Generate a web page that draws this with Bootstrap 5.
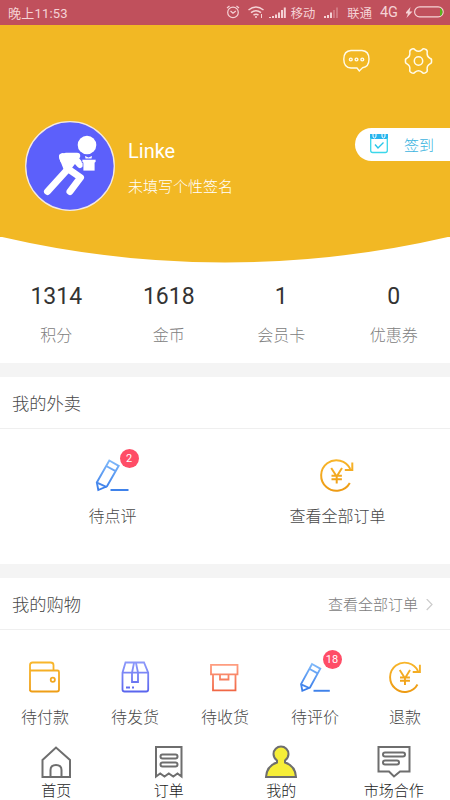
<!DOCTYPE html>
<html lang="zh-CN">
<head>
<meta charset="utf-8">
<meta name="viewport" content="width=device-width, initial-scale=1">
<title>我的</title>
<link href="https://cdn.jsdelivr.net/npm/bootstrap@5.3.0/dist/css/bootstrap.min.css" rel="stylesheet">
<style>
body{font-family:Roboto,"Noto Sans CJK SC",sans-serif;font-weight:300;color:#555;background:#fff;line-height:1;overflow:hidden}
svg{display:block;flex:none;fill:none}
.screen{width:450px;height:800px}
.status{height:25px;background:#c0505c;color:#f5d3d6;font-size:12.3px;font-weight:400;padding:0 6px 0 8px}
.clock{font-size:13px;letter-spacing:.2px;padding-top:2px}
.net{font-size:14.500px;padding-top:2px}
.bolt{fill:#f5d3d6}
.hero{height:213px;background:#f2b824;color:#fff}
.tools{height:74px;padding-right:17px}
.tools svg{margin-top:-1px}
.profile{height:90px;margin-top:22px;padding-left:25px}
.avatar{width:90px;height:90px}
.who{margin-left:13px}
.nick{font-size:20px;line-height:24px;margin-top:18px;font-weight:400}
.sign{font-size:15px;line-height:20px;margin-top:14px;color:#fff}
.signin{width:95px;height:33px;margin-top:7px;background:#fff;color:#3db4e0;font-size:15px;border-radius:17px 0 0 17px;padding-left:15px}
.signin span{padding-top:4px}
.stats{height:100px}
.num{font-size:23px;line-height:26px;color:#333;margin-top:21px;font-weight:400}
.cap{font-size:16px;line-height:20px;color:#808080;margin-top:16px}
.gap-strip{height:14px;background:#f4f4f4}
.head{height:52px;border-bottom:1px solid #efefef;font-size:17.3px;color:#484848;padding:4px 17px 0 12px}
.more{font-size:15px;color:#7c7c7c}
.takeout{height:135px}
.entry{font-size:16px;color:#484848}
.takeout .entry{padding-top:27px}
.takeout .lbl{margin-top:14px}
.takeout svg{margin-left:-2px}
.shop{height:106px}
.shop .entry{padding-top:30px}
.shop .lbl{margin-top:13px}
.lbl{line-height:20px}
.dot{top:-7px;left:24px;width:19px;height:19px;background:#ff4d67;color:#fff;font-size:11px;font-weight:400}
.shop .dot{top:-10px;left:24px}
.tabs{height:64px;color:#1c1c1c;font-size:15px;padding-top:9px}
.tabs .lbl{margin-top:2px}
</style>
</head>
<body>
<main class="screen d-flex flex-column">
<div class="status d-flex align-items-center justify-content-between">
  <span class="clock">晚上11:53</span>
  <div class="d-flex align-items-center">
    <svg width="14" height="14" stroke="#f5d3d6" stroke-width="1.2"><circle cx="7" cy="7.4" r="5.3"/><path d="M4.5 6L7 8.2 9.8 6M1 3L3.5 1M10.500 1L13 3"/></svg>
    <svg class="ms-2" width="17" height="14" stroke="#f5d3d6" stroke-width="1.5"><path d="M.5 5Q8 -1 15.500 5M3 7.700Q8 3.700 13 7.700M5.500 10.200Q8 8.200 10.500 10.200"/><circle cx="8" cy="12" r="1" fill="#f5d3d6" stroke="none"/><path d="M13.500 9v4" stroke-width="1"/></svg>
    <svg class="ms-1" width="18" height="13" stroke="#f5d3d6" stroke-width="2"><path d="M1 12v-1M4 12v-2M7 12V8.500M10 12V6.500M13 12V4M15.800 12V1.500"/></svg>
    <span class="ms-1 pt-1">移动</span>
    <svg class="ms-2" width="16" height="13" stroke="#f5d3d6" stroke-width="2"><path d="M2 12v-2M5 12V9M8 12V6.500"/><path d="M11 12V4M14 12V1.500" opacity=".3"/></svg>
    <span class="ms-2 pt-1">联通</span>
    <span class="net ms-2">4G</span>
    <svg class="bolt ms-2" width="8" height="13"><path d="M4.500 1L-1 7.500h3L.500 12 6.500 5.500h-3z"/></svg>
    <svg width="30" height="12"><rect x=".6" y=".9" width="28.600" height="10" rx="5" stroke="#f5d3d6" stroke-width="1.200"/><path d="M26 2v8q2.500-1 2.500-4T26 2z" fill="#58b51c"/></svg>
  </div>
</div>

<header class="hero">
  <div class="tools d-flex justify-content-end align-items-center">
    <svg class="me-4" width="29" height="26" stroke="#fffbea" stroke-width="1.400"><path d="M8 2.500h11Q26 3 26 11T19.500 19.800L16.300 23 14 20H8Q.8 19.500.8 11.200T8 2.500z"/><circle cx="7.800" cy="11.500" r="1.400"/><circle cx="13.500" cy="11.500" r="1.400"/><circle cx="19.300" cy="11.500" r="1.400"/></svg>
    <svg class="ms-2" width="29" height="28" stroke="#fffbea" stroke-width="1.500" stroke-linejoin="round"><path d="M8 2Q9.800 1.200 11 2.800 14.500 5.700 18 2.800 19.300 1.200 21.300 2.200 23.600 3 23.200 5 22.500 9.600 26 11.200 28 11.800 27.500 14 28 16.200 26 16.800 22.500 18.500 23.200 23 23.600 25 21.300 25.800 19.300 26.800 18 25.200 14.500 22.300 11 25.200 9.700 26.800 7.700 25.800 5.400 25 5.800 23 6.500 18.500 3 16.800 1 16.200 1.500 14 1 11.800 3 11.200 6.500 9.500 5.800 5 5.600 2.900 8 2z"/><circle cx="14.500" cy="14" r="4.200"/></svg>
  </div>
  <div class="profile d-flex">
    <svg class="avatar" viewBox="0 0 90 90"><circle cx="45" cy="45" r="44.300" fill="#5c60fb" stroke="#f4eae0" stroke-width="1.300"/>
      <g stroke="#fff" stroke-width="7" stroke-linecap="round" stroke-linejoin="round"><path d="M42 49L22.500 70.500M44 48.500L55.500 56.500 45 70.500"/><path d="M37.500 36.500L41 35H52L42 48z" fill="#fff" stroke-width="6.500"/><path d="M37.500 35.500l1 3.500M51 39l4 4.500" stroke-width="7"/></g>
      <g fill="#fff"><circle cx="62" cy="24" r="9.300"/><path d="M57 38.300h14v3.200h-1v8.500H58v-8.500h-1z" stroke="#5c60fb" stroke-width=".8"/><path d="M60.500 37.500l-.5-2.500 3.500 1.500 3.500-1.500-.5 2.500z"/></g></svg>
    <div class="who flex-grow-1"><div class="nick">Linke</div><div class="sign">未填写个性签名</div></div>
    <div class="signin d-flex align-items-center">
      <svg width="18" height="20"><path d="M0 0h18v5H0z" fill="#27b5ee"/><path d="M.7 4v12.500Q.7 18.500 2.700 18.500h12.600Q17.300 18.500 17.300 16.500V4" stroke="#3bd7ea" stroke-width="1.300"/><path d="M5 10.500l3 3.500 5.500-5.500" stroke="#28c6e9" stroke-width="1.400"/><path d="M3 0v2q0 2 1.500 2T6 2V0M12 0v2q0 2 1.500 2T15 2V0" stroke="#fff"/></svg>
      <span class="ms-3">签到</span>
    </div>
  </div>
</header>
<svg width="450" height="26"><path d="M0 -.500A986.600 986.600 0 0 0 450 -.500z" fill="#f2b824"/></svg>

<section class="stats row g-0 text-center">
  <div class="col-3"><div class="num">1314</div><div class="cap">积分</div></div>
  <div class="col-3"><div class="num">1618</div><div class="cap">金币</div></div>
  <div class="col-3"><div class="num">1</div><div class="cap">会员卡</div></div>
  <div class="col-3"><div class="num">0</div><div class="cap">优惠券</div></div>
</section>
<div class="gap-strip"></div>

<section>
  <div class="head d-flex align-items-center">我的外卖</div>
  <div class="takeout row g-0">
    <div class="entry col-6 d-flex flex-column align-items-center">
      <div class="position-relative">
        <svg width="36" height="37" viewBox="0 0 36 37" stroke="url(#blue)" stroke-width="1.900"><defs>
          <linearGradient id="blue" gradientUnits="userSpaceOnUse" x1="0" y1="3" x2="0" y2="36"><stop stop-color="#83bcfb"/><stop offset="1" stop-color="#3478e8"/></linearGradient>
          <linearGradient id="gold" gradientUnits="userSpaceOnUse" x1="0" y1="3" x2="0" y2="36"><stop stop-color="#f8b62b"/><stop offset="1" stop-color="#ed9a13"/></linearGradient>
          <linearGradient id="violet" gradientUnits="userSpaceOnUse" x1="0" y1="3" x2="0" y2="34"><stop stop-color="#8c98fa"/><stop offset="1" stop-color="#5661ed"/></linearGradient>
          <linearGradient id="coral" gradientUnits="userSpaceOnUse" x1="0" y1="3" x2="0" y2="34"><stop stop-color="#ffa083"/><stop offset="1" stop-color="#ef603e"/></linearGradient></defs>
          <path d="M15.300 4.500l9.400 5.300L13 30.300 4.300 34 2.800 26.500zM12.200 10l9.400 5.200M3 26.700l9.800 4.400"/><path d="M16.500 34h18" stroke="#3f82ea" stroke-width="2"/></svg>
        <span class="dot position-absolute rounded-circle d-flex align-items-center justify-content-center">2</span>
      </div>
      <div class="lbl">待点评</div>
    </div>
    <div class="entry col-6 d-flex flex-column align-items-center">
      <svg width="36" height="37" viewBox="0 0 36 37" stroke="url(#gold)" stroke-width="2"><path d="M30.800 27A15.300 15.300 0 1 1 31.300 13M33.300 6.500v7.500h-7.500M12.200 12l5.500 8.500L23 12M12.500 19.800h10.400M12.500 23.200h10.400M17.700 20v7.500"/></svg>
      <div class="lbl">查看全部订单</div>
    </div>
  </div>
</section>
<div class="gap-strip"></div>

<section>
  <div class="head d-flex align-items-center justify-content-between"><span>我的购物</span>
    <span class="more d-flex align-items-center">查看全部订单<svg class="ms-2" width="7" height="13" stroke="#ccc" stroke-width="1.200"><path d="M.7 0L6 5.500.7 11"/></svg></span></div>
  <div class="shop d-flex">
    <div class="entry flex-fill w-100 d-flex flex-column align-items-center"><svg width="33" height="35" viewBox="1 0 33 35" stroke="url(#gold)" stroke-width="1.800"><path d="M2 31V5Q2 2.500 4.500 2.500h18Q25.500 2.500 25.500 5v5.500M2 10.500h27.500Q31 10.500 31 12v17.500Q31 31.500 29 31.500H4Q2 31.500 2 29.500"/><circle cx="24.800" cy="19.700" r="2.100"/></svg><div class="lbl">待付款</div></div>
    <div class="entry flex-fill w-100 d-flex flex-column align-items-center"><svg width="33" height="35" viewBox="0 0 33 35" stroke="url(#violet)" stroke-width="1.800"><path d="M6.500 2.500h18.500l4.200 10.200v16.800Q29.200 31.500 27.200 31.500H5.500Q3.500 31.500 3.500 29.500V12.700zM3.500 12.700h25.700M15 3l-2 9.700V22h6v-9.300L17 3"/><path d="M7 27.500h4m2 0h2"/></svg><div class="lbl">待发货</div></div>
    <div class="entry flex-fill w-100 d-flex flex-column align-items-center"><svg width="33" height="35" viewBox="1 0 33 35" stroke="url(#coral)" stroke-width="1.800"><path d="M3 4.800h26.500v9.500H3zM5 14.300v16h22.500v-16M12 14.300v5.200h8.500v-5.200"/></svg><div class="lbl">待收货</div></div>
    <div class="entry flex-fill w-100 d-flex flex-column align-items-center">
      <div class="position-relative"><svg width="33" height="35" viewBox="1.500 0 37.500 39.800" stroke="url(#blue)" stroke-width="2.100"><path d="M16.300 4.500l9.400 5.300L14 31.300 5.300 35 3.800 27.500zM13.200 10l9.400 5.200M4 27.700l9.800 4.400"/><path d="M18 35h18.500" stroke="#3f82ea" stroke-width="2.200"/></svg>
      <span class="dot position-absolute rounded-circle d-flex align-items-center justify-content-center">18</span></div>
      <div class="lbl">待评价</div></div>
    <div class="entry flex-fill w-100 d-flex flex-column align-items-center"><svg width="33" height="35" viewBox="1 1.500 34.500 36.500" stroke="url(#gold)" stroke-width="2"><path d="M30.800 27A15.300 15.300 0 1 1 31.300 13M33.300 6.500v7.500h-7.500M12.200 12l5.500 8.500L23 12M12.500 19.800h10.400M12.500 23.200h10.400M17.700 20v7.500"/></svg><div class="lbl">退款</div></div>
  </div>
</section>

<nav class="tabs row g-0 text-center">
  <div class="col-3 d-flex flex-column align-items-center"><svg width="32" height="34" stroke="#6e6e6e" stroke-width="2"><path d="M2.500 15L16 2.500 30 15v17H2.500zM10.500 32V25q0-5 5.500-5t5.500 5v7"/></svg><div class="lbl">首页</div></div>
  <div class="col-3 d-flex flex-column align-items-center"><svg width="32" height="34" stroke="#6e6e6e" stroke-width="2"><path d="M3 31.500V2h25.500v29.500l-4-3-4.200 3-4.500-3-4.300 3-4.300-3z"/><rect x="7.500" y="9.500" width="17" height="4" rx="2"/><rect x="7.500" y="17.500" width="17" height="4" rx="2"/></svg><div class="lbl">订单</div></div>
  <div class="col-3 d-flex flex-column align-items-center"><svg width="34" height="34" stroke="#6e6e6e" stroke-width="2"><path d="M2 32C2.500 24 6.500 19.500 13 17.500V15.500C10.500 13.500 9.500 11.500 9.500 9a7.500 7.500 0 0 1 15 0C24.500 11.500 23.500 13.500 21 15.500v2C27.500 19.500 31.500 24 32 32z" fill="#f6ee38"/></svg><div class="lbl">我的</div></div>
  <div class="col-3 d-flex flex-column align-items-center"><svg width="34" height="34" stroke="#6e6e6e" stroke-width="2"><path d="M1.500 2h31v24.500h-9.500L17 31.500l-5-5H1.500z"/><rect x="6" y="7.500" width="22" height="4" rx="2"/><rect x="6" y="15.500" width="16" height="4" rx="2"/></svg><div class="lbl">市场合作</div></div>
</nav>
</main>
<script src="https://cdn.jsdelivr.net/npm/bootstrap@5.3.0/dist/js/bootstrap.bundle.min.js"></script>
</body>
</html>
